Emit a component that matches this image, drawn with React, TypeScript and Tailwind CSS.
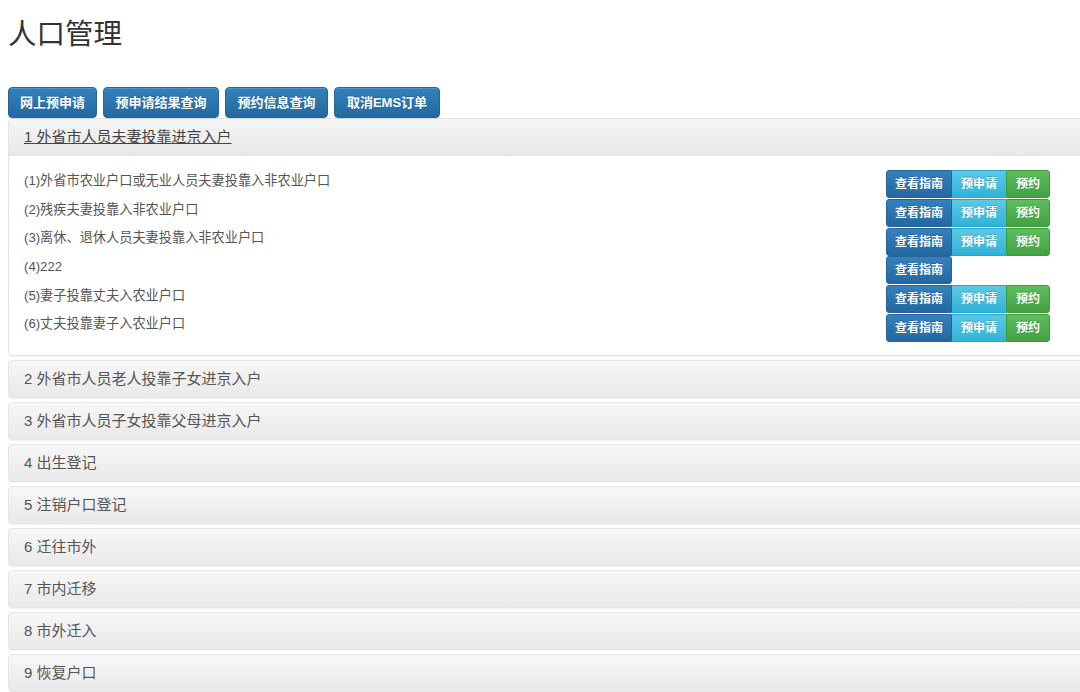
import React from "react";

const font = { fontFamily: '"Liberation Sans", "Noto Sans CJK SC", sans-serif' };

const topButtons = [
  { label: "网上预申请", w: "w-[89px]" },
  { label: "预申请结果查询", w: "w-[116px]" },
  { label: "预约信息查询", w: "w-[103px]" },
  { label: "取消EMS订单", w: "w-[106px]" },
];

const items = [
  { text: "(1)外省市农业户口或无业人员夫妻投靠入非农业户口", full: true },
  { text: "(2)残疾夫妻投靠入非农业户口", full: true },
  { text: "(3)离休、退休人员夫妻投靠入非农业户口", full: true },
  { text: "(4)222", full: false },
  { text: "(5)妻子投靠丈夫入农业户口", full: true },
  { text: "(6)丈夫投靠妻子入农业户口", full: true },
];

const panels = [
  "2 外省市人员老人投靠子女进京入户",
  "3 外省市人员子女投靠父母进京入户",
  "4 出生登记",
  "5 注销户口登记",
  "6 迁往市外",
  "7 市内迁移",
  "8 市外迁入",
  "9 恢复户口",
];

export default function App() {
  return (
    <div className="w-[1080px] h-[692px] overflow-hidden bg-white" style={font}>
      <div className="pl-[8px] pt-[14px]">
        <h1 className="text-[28.5px] leading-[40px] text-[#333] font-normal">人口管理</h1>
        <div className="flex gap-[6px] mt-[33px] h-[31px]">
          {topButtons.map((b) => (
            <div
              key={b.label}
              className={`${b.w} h-[31px] flex items-center justify-center rounded-[4px] border border-[#2a6496] bg-gradient-to-b from-[#3282bd] to-[#2468a0] text-white text-[13px] font-bold [text-shadow:0_-1px_0_rgba(0,0,0,0.2)] shadow-[inset_0_1px_0_rgba(255,255,255,0.15),0_1px_1px_rgba(0,0,0,0.075)]`}
            >
              {b.label}
            </div>
          ))}
        </div>

        <div className="w-[1090px] border border-[#e4e4e4] rounded-[4px] shadow-[0_1px_1px_rgba(0,0,0,0.05)]">
          <div className="h-[37px] flex items-center px-[15px] bg-gradient-to-b from-[#f5f5f5] to-[#e8e8e8] border-b border-[#e4e4e4]">
            <span className="text-[15px] text-[#444] underline">1 外省市人员夫妻投靠进京入户</span>
          </div>
          <div className="bg-white pt-[14px] pb-[13px] pl-[15px] pr-[47px] flex flex-col">
            {items.map((it) => (
              <div key={it.text} className="h-[28.7px] flex items-center justify-between">
                <span className="text-[13.2px] text-[#555] -mt-[7px]">{it.text}</span>
                <div className="flex w-[164px] h-[28px] text-white text-[12px] font-bold [text-shadow:0_-1px_0_rgba(0,0,0,0.2)]">
                  <div className={`w-[66px] h-full flex items-center justify-center border border-[#2a6496] bg-gradient-to-b from-[#3282bd] to-[#2468a0] ${it.full ? "rounded-l-[3px]" : "rounded-[3px]"}`}>
                    查看指南
                  </div>
                  {it.full && (
                    <>
                      <div className="w-[54px] h-full flex items-center justify-center border-y border-[#28a4c9] bg-gradient-to-b from-[#5bc8e6] to-[#2fb3d8]">
                        预申请
                      </div>
                      <div className="w-[44px] h-full flex items-center justify-center rounded-r-[3px] border border-[#3e983e] bg-gradient-to-b from-[#5cbf5c] to-[#44a044]">
                        预约
                      </div>
                    </>
                  )}
                </div>
              </div>
            ))}
          </div>
        </div>

        <div className="flex flex-col gap-[4px] mt-[4px]">
          {panels.map((p) => (
            <div
              key={p}
              className="w-[1090px] h-[38px] flex items-center px-[15px] border border-[#e6e6e6] rounded-[4px] bg-gradient-to-b from-[#f7f7f7] to-[#e9e9e9] shadow-[0_1px_1px_rgba(0,0,0,0.05)]"
            >
              <span className="text-[15px] text-[#555]">{p}</span>
            </div>
          ))}
        </div>
      </div>
    </div>
  );
}
